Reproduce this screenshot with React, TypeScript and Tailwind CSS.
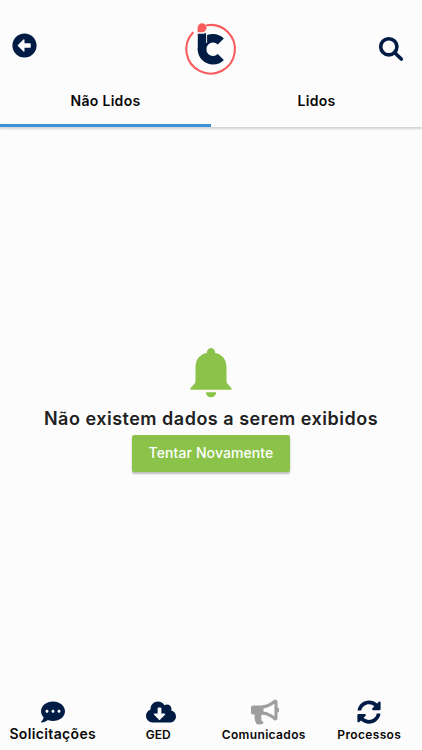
import { FaArrowAltCircleLeft, FaCommentDots, FaCloudDownloadAlt, FaSyncAlt } from "react-icons/fa";

const TABS = ["Não Lidos", "Lidos"];

function BullhornIcon({ size, className }: { size: number; className: string }) {
  return (
    <svg width={size} height={size} viewBox="0 0 1792 1792" fill="currentColor" stroke="currentColor" strokeWidth="70" className={className}>
      <path d="M1664 640q53 0 90.5 37.5t37.5 90.5-37.5 90.5-90.5 37.5v384q0 52-38 90t-90 38q-417-347-812-380-58 19-91 66t-31 100.5 40 92.5q-20 33-23 65.5t6 58 33.5 55 48 50 61.5 50.5q-29 58-111.5 83t-168.5 11.5-132-55.5q-7-23-29.5-87.5t-32-94.5-23-89-15-101 3.5-98.5 22-110.5h-122q-66 0-113-47t-47-113v-192q0-66 47-113t113-47h480q435 0 896-384 52 0 90 38t38 90v384zm-128 604v-954q-394 302-768 343v270q377 42 768 341z" />
    </svg>
  );
}

const NAV = [
  { label: "Solicitações", icon: FaCommentDots, size: 24, iconClass: "text-[#001c45]", labelClass: "text-[14px] tracking-[0.35px] -mt-px" },
  { label: "GED", icon: FaCloudDownloadAlt, size: 30, iconClass: "text-[#001c45] ml-[6px]", labelClass: "text-[12px]" },
  { label: "Comunicados", icon: BullhornIcon, size: 28, iconClass: "text-[#9e9e9e] ml-[3px]", labelClass: "text-[12px] tracking-[0.35px]" },
  { label: "Processos", icon: FaSyncAlt, size: 24, iconClass: "text-[#001c45]", labelClass: "text-[12px] tracking-[0.35px]" },
];

function Logo() {
  return (
    <svg width="70" height="70" viewBox="0 0 70 70" fill="none">
      <path d="M16.8 18.7A24.3 24.3 0 1 0 31 11.2" stroke="#fa5c5e" strokeWidth="2.1" strokeLinecap="round" />
      <path d="M21.6 18.2V14.2a4.5 4.5 0 1 1 4.9 4Z" fill="#fa5c5e" />
      {/* stem and bowl of the monogram */}
      <path d="M21.8 19.8h4.5c1.800 0 3.200-.5 4-1.300V36h-8.500Z" fill="#001c45" />
      <path d="M44.800 27.500A11 11 0 1 0 44.800 43" stroke="#001c45" strokeWidth="8.600" />
      <path d="M30.600 18v11" stroke="#fcfcfc" strokeWidth="0.900" />
    </svg>
  );
}

function SearchIcon() {
  return (
    <svg width="26" height="26" viewBox="0 0 26 26" fill="none" stroke="#001c45">
      <circle cx="10.8" cy="10.8" r="8.1" strokeWidth="3.6" />
      <path d="M16.5 16.5L23.3 23" strokeWidth="3.6" strokeLinecap="round" />
    </svg>
  );
}

function BellIcon() {
  return (
    <svg width="42" height="50" viewBox="0 0 42 50" fill="#8bc34a">
      <path d="M21 0a3.9 3.9 0 0 1 3.9 4.8C32 6.2 36.5 11.5 36.5 19V33c0 1.200.3 2 1 2.700l3.400 3.800c.5.500.7 1 .7 2.200H.4c0-1.200.2-1.700.7-2.200l3.400-3.800C5.200 35 5.500 34.200 5.500 33V19C5.500 11.500 10 6.200 17.100 4.800A3.900 3.900 0 0 1 21 0Z" />
      <path d="M15.8 44.300h10.400c-.3 3-2.400 5-5.200 5s-4.900-2-5.200-5Z" />
    </svg>
  );
}

export default function App() {
  return (
    <div className="flex flex-col h-[750px] bg-[#fcfcfc] font-[Inter,sans-serif] text-[#080808]">
      {/* Header */}
      <header className="flex items-start justify-between h-[84px] pl-3 pr-[18px] pt-[14px]">
        <button aria-label="Voltar" className="w-8 pt-[19px]">
          <FaArrowAltCircleLeft size={25} className="text-[#001c45]" />
        </button>
        <Logo />
        <button aria-label="Buscar" className="pt-[22px]"><SearchIcon /></button>
      </header>

      {/* Tabs */}
      <nav className="flex h-[43px] shadow-[0_2px_2px_rgba(0,0,0,0.16)]">
        {TABS.map((tab, i) => (
          <button
            key={tab}
            className={`flex-1 pb-2 text-[14px] font-semibold tracking-[0.3px] border-b-[3px] ${i === 0 ? "border-[#3c91d6]" : "border-transparent"}`}
          >
            {tab}
          </button>
        ))}
      </nav>

      {/* Empty state */}
      <main className="flex flex-1 flex-col items-center pt-[221px]">
        <BellIcon />
        <p className="mt-[7px] text-[18px] leading-[27px] font-semibold tracking-[0.5px] text-[#212121]">
          Não existem dados a serem exibidos
        </p>
        <button className="mt-[3px] w-[158px] h-[37px] pb-[2px] rounded-xs bg-[#8bc34a] text-white text-[14px] font-medium tracking-[0.1px] shadow-[0_2px_2px_rgba(0,0,0,0.25)]">
          Tentar Novamente
        </button>
      </main>

      {/* Bottom navigation */}
      <footer className="flex h-[52px]">
        {NAV.map(({ label, icon: Icon, size, iconClass, labelClass }) => (
          <button key={label} className="flex flex-1 flex-col items-center">
            <span className="flex h-[28px] items-center">
              <Icon size={size} className={iconClass} />
            </span>
            <span className={`leading-[17px] font-semibold ${labelClass}`}>{label}</span>
          </button>
        ))}
      </footer>
    </div>
  );
}
